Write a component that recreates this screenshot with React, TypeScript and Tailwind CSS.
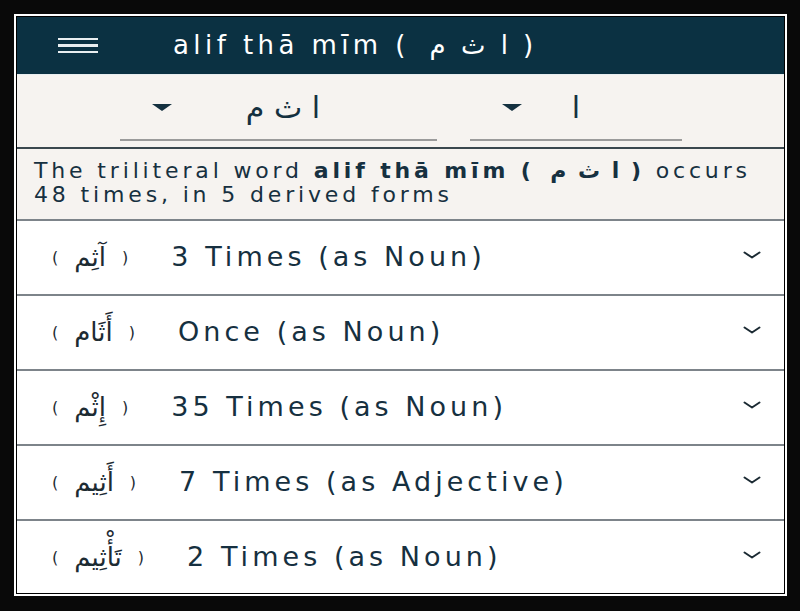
import React from "react"

const rows = [
  { ar: "آثِم", label: "3 Times (as Noun)" },
  { ar: "أَثَام", label: "Once (as Noun)" },
  { ar: "إِثْم", label: "35 Times (as Noun)" },
  { ar: "أَثِيم", label: "7 Times (as Adjective)" },
  { ar: "تَأْثِيم", label: "2 Times (as Noun)" },
]

function Caret() {
  return (
    <svg width="20" height="7" viewBox="0 0 20 7" className="shrink-0">
      <polygon points="0,0 20,0 10,7" fill="#14303f" />
    </svg>
  )
}

function Chevron() {
  return (
    <svg width="18" height="8" viewBox="0 0 18 8" className="mb-[6px] shrink-0">
      <polyline points="1.5,1.5 9,6.5 16.5,1.5" fill="none" stroke="#1b2a33" strokeWidth="2" strokeLinecap="round" strokeLinejoin="round" />
    </svg>
  )
}

export default function App() {
  return (
    <div className="h-[611px] w-[800px] bg-[#090909] pl-[14px] pr-[13px] pt-[14px] pb-[15px] font-['DejaVu_Sans',sans-serif]">
      <div className="border-2 border-white">
        <div className="flex h-[578px] flex-col overflow-hidden border border-black bg-white text-[#163040]">
          {/* app bar */}
          <div className="flex h-[57px] shrink-0 items-center bg-[#0b3142] pl-[41px]">
            <div className="flex w-[40px] flex-col gap-[4px]">
              <span className="h-[2.5px] bg-[#e9eef0]" />
              <span className="h-[2.5px] bg-[#e9eef0]" />
              <span className="h-[2.5px] bg-[#e9eef0]" />
            </div>
            <h1 className="ml-[75px] text-[26px] font-medium tracking-[0.17em] text-white">
              alif thā mīm <span className="[word-spacing:7px]">( ا ث م )</span>
            </h1>
          </div>

          {/* root pickers */}
          <div className="flex h-[75px] shrink-0 gap-[33px] border-t border-[#e8eef0] border-b-2 border-b-[#3a474e] bg-[#f6f3f0] pl-[103px]">
            <div className="flex h-[66px] w-[317px] items-center border-b-2 border-[#9b9b9b] pl-[32px] pr-[117px]">
              <Caret />
              <span dir="rtl" className="flex-1 text-right text-[30px] text-[#14303f]">
                ا ث م
              </span>
            </div>
            <div className="flex h-[66px] w-[212px] items-center border-b-2 border-[#9b9b9b] pl-[32px] pr-[102px]">
              <Caret />
              <span className="flex-1 text-right text-[30px] text-[#14303f]">ا</span>
            </div>
          </div>

          {/* summary */}
          <div className="shrink-0 bg-[#f6f3f0] px-[17px] pt-[10px] pb-[12px] text-[22px] leading-[24px] tracking-[0.175em]">
            The triliteral word <b>alif thā mīm <span className="[word-spacing:4px]">( ا ث م )</span></b> occurs
            <br />
            48 times, in 5 derived forms
          </div>

          {/* derived forms */}
          {rows.map((r) => (
            <div
              key={r.label}
              className="flex h-[75px] shrink-0 items-center border-t-2 border-[#7d848a] pl-[35px] pr-[23px]"
            >
              <div className="flex items-center gap-[16px] text-[26px] text-[#1d2b33]">
                <span className="text-[16px]">(</span>
                <span dir="rtl">{r.ar}</span>
                <span className="text-[16px]">)</span>
              </div>
              <span className="ml-[43px] flex-1 text-[27px] tracking-[0.15em]">{r.label}</span>
              <Chevron />
            </div>
          ))}
        </div>
      </div>
    </div>
  )
}
